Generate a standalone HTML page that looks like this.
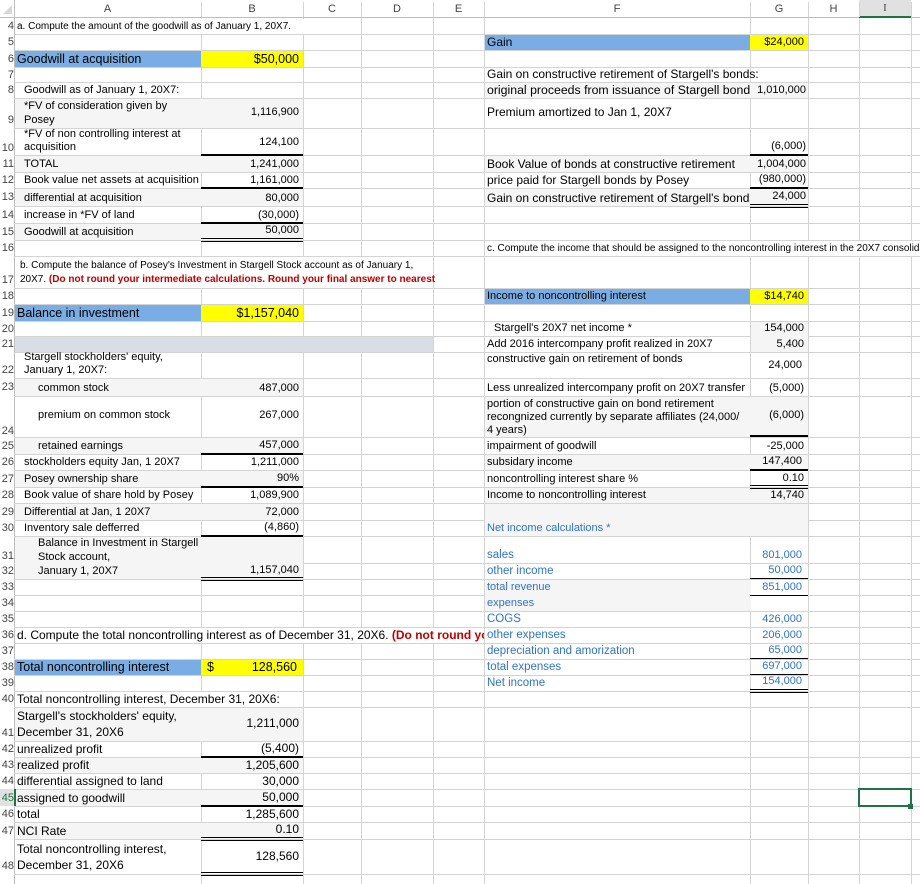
<!DOCTYPE html>
<html><head><meta charset="utf-8"><style>
body{margin:0;width:920px;height:884px;overflow:hidden;background:#fff;position:relative;font-family:"Liberation Sans",Arial,sans-serif;font-size:11px;color:#000}
div{position:absolute;box-sizing:border-box}
.h{left:14px;width:906px;height:1px;background:#d4d4d4}
.v{top:18px;width:1px;height:866px;background:#d4d4d4}
.t{display:flex;align-items:flex-end;padding-bottom:1px;white-space:nowrap;overflow:hidden;line-height:13px}
.m{align-items:center}
.r{justify-content:flex-end;padding-right:4px}
.k{background:#000;height:2px}
.k1{background:#000;height:1px}
.dbl{border-top:1px solid #000;border-bottom:1px solid #000;height:4px}
.n{left:0;width:14px;color:#444;font-size:11px;display:flex;align-items:center;justify-content:flex-end;overflow:hidden;white-space:nowrap}
.ch{top:0;height:18px;color:#444;font-size:11px;display:flex;align-items:center;justify-content:center}
.s{font-size:12.5px}
.b{font-size:12px}
.bl{color:#2e74c8}
.c10{font-size:10px}
.red{color:#c00000;font-weight:bold}
</style></head><body>
<div style="left:0;top:17px;width:920px;height:1px;background:#bdbdbd"></div>
<div style="left:14px;top:0;width:1px;height:884px;background:#bdbdbd"></div>
<div style="left:3px;top:5px;width:0;height:0;border-left:9px solid transparent;border-bottom:9px solid #d8d8d8"></div>
<div class="ch" style="left:14px;width:187px">A</div>
<div class="ch" style="left:201px;width:102px">B</div>
<div class="ch" style="left:303px;width:58px">C</div>
<div class="ch" style="left:361px;width:72px">D</div>
<div class="ch" style="left:433px;width:51px">E</div>
<div class="ch" style="left:484px;width:266px">F</div>
<div class="ch" style="left:750px;width:58px">G</div>
<div class="ch" style="left:808px;width:51px">H</div>
<div class="ch" style="left:859px;width:52px;background:#e1e1e1;border-bottom:2px solid #217346;font-family:'Liberation Serif',serif">I</div>
<div style="left:201px;top:2px;width:1px;height:15px;background:#d4d4d4"></div>
<div style="left:303px;top:2px;width:1px;height:15px;background:#d4d4d4"></div>
<div style="left:361px;top:2px;width:1px;height:15px;background:#d4d4d4"></div>
<div style="left:433px;top:2px;width:1px;height:15px;background:#d4d4d4"></div>
<div style="left:484px;top:2px;width:1px;height:15px;background:#d4d4d4"></div>
<div style="left:750px;top:2px;width:1px;height:15px;background:#d4d4d4"></div>
<div style="left:808px;top:2px;width:1px;height:15px;background:#d4d4d4"></div>
<div style="left:859px;top:2px;width:1px;height:15px;background:#d4d4d4"></div>
<div style="left:911px;top:2px;width:1px;height:15px;background:#d4d4d4"></div>
<div class="v" style="left:201px"></div><div class="v" style="left:303px"></div><div class="v" style="left:361px"></div><div class="v" style="left:433px"></div><div class="v" style="left:484px"></div><div class="v" style="left:750px"></div><div class="v" style="left:808px"></div><div class="v" style="left:859px"></div><div class="v" style="left:911px"></div>
<div class="h" style="top:34px"></div><div class="h" style="top:50px"></div><div class="h" style="top:67px"></div><div class="h" style="top:82px"></div><div class="h" style="top:98px"></div><div class="h" style="top:128px"></div><div class="h" style="top:155px"></div><div class="h" style="top:172px"></div><div class="h" style="top:188px"></div><div class="h" style="top:206px"></div><div class="h" style="top:223px"></div><div class="h" style="top:240px"></div><div class="h" style="top:256px"></div><div class="h" style="top:288px"></div><div class="h" style="top:304px"></div><div class="h" style="top:321px"></div><div class="h" style="top:336px"></div><div class="h" style="top:352px"></div><div class="h" style="top:378px"></div><div class="h" style="top:396px"></div><div class="h" style="top:437px"></div><div class="h" style="top:454px"></div><div class="h" style="top:470px"></div><div class="h" style="top:487px"></div><div class="h" style="top:503px"></div><div class="h" style="top:520px"></div><div class="h" style="top:536px"></div><div class="h" style="top:563px"></div><div class="h" style="top:579px"></div><div class="h" style="top:595px"></div><div class="h" style="top:611px"></div><div class="h" style="top:627px"></div><div class="h" style="top:643px"></div><div class="h" style="top:659px"></div><div class="h" style="top:675px"></div><div class="h" style="top:691px"></div><div class="h" style="top:707px"></div><div class="h" style="top:741px"></div><div class="h" style="top:757px"></div><div class="h" style="top:773px"></div><div class="h" style="top:789px"></div><div class="h" style="top:806px"></div><div class="h" style="top:822px"></div><div class="h" style="top:839px"></div><div class="h" style="top:874px"></div>
<div style="left:15px;top:19px;width:300px;height:15px;background:#fff"></div>
<div style="left:15px;top:257px;width:418px;height:31px;background:#fff"></div>
<div style="left:485px;top:241px;width:435px;height:15px;background:#fff"></div>
<div style="left:15px;top:628px;width:469px;height:15px;background:#fff"></div>
<div style="left:15px;top:692px;width:288px;height:15px;background:#fff"></div>
<div style="left:15px;top:99px;width:288px;height:29px;background:#f5f5f5"></div>
<div style="left:15px;top:156px;width:288px;height:16px;background:#f5f5f5"></div>
<div style="left:15px;top:189px;width:288px;height:17px;background:#f5f5f5"></div>
<div style="left:15px;top:224px;width:288px;height:16px;background:#f5f5f5"></div>
<div style="left:15px;top:337px;width:418px;height:15px;background:#d9dde6"></div>
<div style="left:15px;top:379px;width:288px;height:17px;background:#f5f5f5"></div>
<div style="left:15px;top:438px;width:288px;height:16px;background:#f5f5f5"></div>
<div style="left:15px;top:471px;width:288px;height:16px;background:#f5f5f5"></div>
<div style="left:15px;top:504px;width:288px;height:16px;background:#f5f5f5"></div>
<div style="left:15px;top:537px;width:288px;height:42px;background:#f5f5f5"></div>
<div style="left:15px;top:708px;width:288px;height:33px;background:#f5f5f5"></div>
<div style="left:15px;top:758px;width:288px;height:15px;background:#f5f5f5"></div>
<div style="left:15px;top:790px;width:288px;height:16px;background:#f5f5f5"></div>
<div style="left:15px;top:823px;width:288px;height:16px;background:#f5f5f5"></div>
<div style="left:485px;top:83px;width:323px;height:15px;background:#f5f5f5"></div>
<div style="left:485px;top:156px;width:323px;height:16px;background:#f5f5f5"></div>
<div style="left:485px;top:189px;width:323px;height:17px;background:#f5f5f5"></div>
<div style="left:751px;top:322px;width:57px;height:30px;background:#f5f5f5"></div>
<div style="left:485px;top:397px;width:323px;height:40px;background:#f5f5f5"></div>
<div style="left:485px;top:455px;width:323px;height:15px;background:#f5f5f5"></div>
<div style="left:485px;top:488px;width:323px;height:15px;background:#f5f5f5"></div>
<div style="left:485px;top:504px;width:323px;height:32px;background:#f5f5f5"></div>
<div style="left:485px;top:580px;width:266px;height:31px;background:#f5f5f5"></div>
<div style="left:15px;top:51px;width:186px;height:16px;background:#79ade3"></div>
<div style="left:201px;top:51px;width:102px;height:16px;background:#ffff00"></div>
<div style="left:485px;top:35px;width:265px;height:15px;background:#79ade3"></div>
<div style="left:750px;top:35px;width:58px;height:15px;background:#ffff00"></div>
<div style="left:15px;top:305px;width:186px;height:16px;background:#79ade3"></div>
<div style="left:201px;top:305px;width:102px;height:16px;background:#ffff00"></div>
<div style="left:485px;top:289px;width:265px;height:15px;background:#79ade3"></div>
<div style="left:750px;top:289px;width:58px;height:15px;background:#ffff00"></div>
<div style="left:15px;top:660px;width:186px;height:15px;background:#79ade3"></div>
<div style="left:201px;top:660px;width:102px;height:15px;background:#ffff00"></div>
<div class="k" style="left:201px;top:154px;width:102px"></div>
<div class="k" style="left:201px;top:187px;width:102px"></div>
<div class="k" style="left:201px;top:222px;width:102px"></div>
<div class="dbl" style="left:201px;top:238px;width:102px"></div>
<div class="k" style="left:750px;top:154px;width:58px"></div>
<div class="k" style="left:750px;top:187px;width:58px"></div>
<div class="dbl" style="left:750px;top:204px;width:58px"></div>
<div class="k" style="left:201px;top:453px;width:102px"></div>
<div class="k" style="left:201px;top:486px;width:102px"></div>
<div class="k" style="left:201px;top:535px;width:102px"></div>
<div class="dbl" style="left:201px;top:577px;width:102px"></div>
<div class="k" style="left:750px;top:435px;width:58px"></div>
<div class="k" style="left:750px;top:469px;width:58px"></div>
<div class="dbl" style="left:750px;top:485px;width:58px"></div>
<div class="k1" style="left:750px;top:578px;width:58px"></div>
<div class="k1" style="left:750px;top:595px;width:58px"></div>
<div class="k1" style="left:750px;top:658px;width:58px"></div>
<div class="k1" style="left:750px;top:674px;width:58px"></div>
<div class="dbl" style="left:750px;top:689px;width:58px"></div>
<div class="k" style="left:201px;top:756px;width:102px"></div>
<div class="k" style="left:201px;top:805px;width:102px"></div>
<div class="dbl" style="left:201px;top:837px;width:102px"></div>
<div class="dbl" style="left:201px;top:872px;width:102px"></div>
<div style="left:858px;top:788px;width:54px;height:19px;border:2px solid #217346"></div>
<div style="left:908px;top:804px;width:5px;height:5px;background:#217346"></div>
<div style="left:14px;top:789px;width:2px;height:17px;background:#217346"></div>
<div class="n" style="top:18px;height:16px">4</div><div class="n" style="top:34px;height:16px">5</div><div class="n" style="top:50px;height:17px">6</div><div class="n" style="top:67px;height:15px">7</div><div class="n" style="top:82px;height:16px">8</div><div class="n" style="top:112px;height:16px">9</div><div class="n" style="top:140px;height:15px">10</div><div class="n" style="top:155px;height:17px">11</div><div class="n" style="top:172px;height:16px">12</div><div class="n" style="top:188px;height:18px">13</div><div class="n" style="top:206px;height:17px">14</div><div class="n" style="top:223px;height:17px">15</div><div class="n" style="top:240px;height:16px">16</div><div class="n" style="top:272px;height:16px">17</div><div class="n" style="top:288px;height:16px">18</div><div class="n" style="top:304px;height:17px">19</div><div class="n" style="top:321px;height:15px">20</div><div class="n" style="top:336px;height:16px">21</div><div class="n" style="top:362px;height:16px">22</div><div class="n" style="top:378px;height:18px">23</div><div class="n" style="top:423px;height:16px">24</div><div class="n" style="top:437px;height:17px">25</div><div class="n" style="top:454px;height:16px">26</div><div class="n" style="top:470px;height:17px">27</div><div class="n" style="top:487px;height:16px">28</div><div class="n" style="top:503px;height:17px">29</div><div class="n" style="top:520px;height:16px">30</div><div class="n" style="top:548px;height:15px">31</div><div class="n" style="top:563px;height:16px">32</div><div class="n" style="top:579px;height:16px">33</div><div class="n" style="top:595px;height:16px">34</div><div class="n" style="top:611px;height:16px">35</div><div class="n" style="top:627px;height:16px">36</div><div class="n" style="top:643px;height:16px">37</div><div class="n" style="top:659px;height:16px">38</div><div class="n" style="top:675px;height:16px">39</div><div class="n" style="top:691px;height:16px">40</div><div class="n" style="top:725px;height:16px">41</div><div class="n" style="top:741px;height:16px">42</div><div class="n" style="top:757px;height:16px">43</div><div class="n" style="top:773px;height:16px">44</div><div class="n" style="top:789px;height:17px;color:#217346;background:#e1e1e1">45</div><div class="n" style="top:806px;height:16px">46</div><div class="n" style="top:822px;height:17px">47</div><div class="n" style="top:858px;height:16px">48</div>

<div class="t c10" style="left:17px;top:18px;width:300px;height:16px">a. Compute the amount of the goodwill as of January 1, 20X7.</div>
<div class="t s" style="left:17px;top:50px;width:184px;height:17px">Goodwill at acquisition</div>
<div class="t r s" style="left:201px;top:50px;width:102px;height:17px">$50,000</div>
<div class="t" style="left:24px;top:82px;width:177px;height:16px">Goodwill as of January 1, 20X7:</div>
<div class="t" style="left:24px;top:98px;width:177px;height:30px;line-height:14px">*FV of consideration given by<br>Posey</div>
<div class="t r m" style="left:201px;top:98px;width:102px;height:30px">1,116,900</div>
<div class="t" style="left:24px;top:128px;width:177px;height:27px;line-height:13px">*FV of non controlling interest at<br>acquisition</div>
<div class="t r m" style="left:201px;top:128px;width:102px;height:30px">124,100</div>
<div class="t" style="left:24px;top:155px;width:177px;height:17px">TOTAL</div><div class="t r" style="left:201px;top:155px;width:102px;height:17px">1,241,000</div>
<div class="t" style="left:24px;top:172px;width:177px;height:16px">Book value net assets at acquisition</div><div class="t r" style="left:201px;top:172px;width:102px;height:16px">1,161,000</div>
<div class="t" style="left:24px;top:188px;width:177px;height:18px">differential at acquisition</div><div class="t r" style="left:201px;top:188px;width:102px;height:18px">80,000</div>
<div class="t" style="left:24px;top:206px;width:177px;height:17px">increase in *FV of land</div><div class="t r" style="left:201px;top:206px;width:102px;height:17px">(30,000)</div>
<div class="t" style="left:24px;top:223px;width:177px;height:17px">Goodwill at acquisition</div><div class="t r" style="left:201px;top:223px;width:102px;height:15px">50,000</div>
<div class="c10" style="left:20px;top:259px;width:420px;line-height:14px;white-space:nowrap;overflow:hidden">b. Compute the balance of Posey's Investment in Stargell Stock account as of January 1,<br>20X7. <span class="red">(Do not round your intermediate calculations. Round your final answer to nearest</span></div>
<div class="t s" style="left:17px;top:304px;width:184px;height:17px">Balance in investment</div>
<div class="t r s" style="left:201px;top:304px;width:102px;height:17px">$1,157,040</div>
<div class="t" style="left:24px;top:352px;width:177px;height:26px;line-height:13px">Stargell stockholders' equity,<br>January 1, 20X7:</div>
<div class="t" style="left:38px;top:378px;width:163px;height:18px">common stock</div><div class="t r" style="left:201px;top:378px;width:102px;height:18px">487,000</div>
<div class="t m" style="left:38px;top:396px;width:163px;height:40px">premium on common stock</div><div class="t r m" style="left:201px;top:396px;width:102px;height:40px">267,000</div>
<div class="t" style="left:38px;top:437px;width:163px;height:17px">retained earnings</div><div class="t r" style="left:201px;top:437px;width:102px;height:16px">457,000</div>
<div class="t" style="left:24px;top:454px;width:177px;height:16px">stockholders equity Jan, 1 20X7</div><div class="t r" style="left:201px;top:454px;width:102px;height:16px">1,211,000</div>
<div class="t" style="left:24px;top:470px;width:177px;height:17px">Posey ownership share</div><div class="t r" style="left:201px;top:470px;width:102px;height:16px">90%</div>
<div class="t" style="left:24px;top:487px;width:177px;height:16px">Book value of share hold by Posey</div><div class="t r" style="left:201px;top:487px;width:102px;height:16px">1,089,900</div>
<div class="t" style="left:24px;top:503px;width:177px;height:17px">Differential at Jan, 1 20X7</div><div class="t r" style="left:201px;top:503px;width:102px;height:17px">72,000</div>
<div class="t" style="left:24px;top:520px;width:177px;height:16px">Inventory sale defferred</div><div class="t r" style="left:201px;top:520px;width:102px;height:15px">(4,860)</div>
<div class="t" style="left:38px;top:536px;width:163px;height:43px;line-height:14px">Balance in Investment in Stargell<br>Stock account,<br>January 1, 20X7</div>
<div class="t r" style="left:201px;top:563px;width:102px;height:15px">1,157,040</div>
<div class="t b" style="left:17px;top:627px;width:467px;height:16px">d. Compute the total noncontrolling interest as of December 31, 20X6.&nbsp;<span class="red">(Do not round your</span></div>
<div class="t s" style="left:17px;top:659px;width:184px;height:16px">Total noncontrolling interest</div>
<div class="t s" style="left:207px;top:659px;width:20px;height:16px">$</div>
<div class="t r s" style="left:201px;top:659px;width:102px;height:16px;padding-right:6px">128,560</div>
<div class="t b" style="left:17px;top:691px;width:300px;height:16px">Total noncontrolling interest, December 31, 20X6:</div>
<div class="t b" style="left:17px;top:707px;width:184px;height:34px;line-height:16px">Stargell's stockholders' equity,<br>December 31, 20X6</div>
<div class="t r m b" style="left:201px;top:707px;width:102px;height:34px">1,211,000</div>
<div class="t b" style="left:17px;top:741px;width:184px;height:16px">unrealized profit</div><div class="t r b" style="left:201px;top:741px;width:102px;height:15px">(5,400)</div>
<div class="t b" style="left:17px;top:757px;width:184px;height:16px">realized profit</div><div class="t r b" style="left:201px;top:757px;width:102px;height:16px">1,205,600</div>
<div class="t b" style="left:17px;top:773px;width:184px;height:16px">differential assigned to land</div><div class="t r b" style="left:201px;top:773px;width:102px;height:16px">30,000</div>
<div class="t b" style="left:17px;top:789px;width:184px;height:17px">assigned to goodwill</div><div class="t r b" style="left:201px;top:789px;width:102px;height:16px">50,000</div>
<div class="t b" style="left:17px;top:806px;width:184px;height:16px">total</div><div class="t r b" style="left:201px;top:806px;width:102px;height:16px">1,285,600</div>
<div class="t b" style="left:17px;top:822px;width:184px;height:17px">NCI Rate</div><div class="t r b" style="left:201px;top:822px;width:102px;height:15px">0.10</div>
<div class="t b" style="left:17px;top:839px;width:184px;height:35px;line-height:16px">Total noncontrolling interest,<br>December 31, 20X6</div>
<div class="t r m b" style="left:201px;top:839px;width:102px;height:35px">128,560</div>

<div class="t b" style="left:487px;top:34px;width:263px;height:16px">Gain</div>
<div class="t r" style="left:750px;top:34px;width:58px;height:16px">$24,000</div>
<div class="t b" style="left:487px;top:67px;width:300px;height:15px">Gain on constructive retirement of Stargell's bonds:</div>
<div class="t b" style="left:487px;top:82px;width:263px;height:16px;font-size:12.3px">original proceeds from issuance of Stargell bonds</div>
<div class="t r" style="left:750px;top:82px;width:58px;height:16px;padding-right:2px">1,010,000</div>
<div class="t b" style="left:487px;top:104px;width:263px;height:16px">Premium amortized to Jan 1, 20X7</div>
<div class="t r" style="left:750px;top:138px;width:58px;height:16px;padding-right:2px">(6,000)</div>
<div class="t b" style="left:487px;top:155px;width:263px;height:17px">Book Value of bonds at constructive retirement</div><div class="t r" style="left:750px;top:155px;width:58px;height:17px;padding-right:2px">1,004,000</div>
<div class="t b" style="left:487px;top:172px;width:263px;height:16px">price paid for Stargell bonds by Posey</div><div class="t r" style="left:750px;top:172px;width:58px;height:15px;padding-right:2px">(980,000)</div>
<div class="t b" style="left:487px;top:188px;width:263px;height:18px">Gain on constructive retirement of Stargell's bonds</div><div class="t r" style="left:750px;top:188px;width:58px;height:16px;padding-right:2px">24,000</div>
<div class="t c10" style="left:487px;top:240px;width:433px;height:16px">c. Compute the income that should be assigned to the noncontrolling interest in the 20X7 consolidated</div>
<div class="t" style="left:487px;top:288px;width:263px;height:16px">Income to noncontrolling interest</div>
<div class="t r" style="left:750px;top:288px;width:58px;height:16px">$14,740</div>
<div class="t" style="left:494px;top:321px;width:256px;height:15px">Stargell's 20X7 net income *</div><div class="t r" style="left:750px;top:321px;width:58px;height:15px">154,000</div>
<div class="t" style="left:487px;top:336px;width:263px;height:16px">Add 2016 intercompany profit realized in 20X7</div><div class="t r" style="left:750px;top:336px;width:58px;height:16px">5,400</div>
<div class="t" style="left:487px;top:352px;width:263px;height:15px">constructive gain on retirement of bonds</div><div class="t r" style="left:750px;top:357px;width:58px;height:16px;padding-right:6px">24,000</div>
<div class="t" style="left:487px;top:378px;width:263px;height:18px">Less unrealized intercompany profit on 20X7 transfer</div><div class="t r" style="left:750px;top:378px;width:58px;height:18px">(5,000)</div>
<div class="t" style="left:487px;top:396px;width:263px;height:41px;line-height:13px;padding-bottom:0">portion of constructive gain on bond retirement<br>recongnized currently by separate affiliates (24,000/<br>4 years)</div>
<div class="t r m" style="left:750px;top:396px;width:58px;height:40px">(6,000)</div>
<div class="t" style="left:487px;top:437px;width:263px;height:17px">impairment of goodwill</div><div class="t r" style="left:750px;top:437px;width:58px;height:17px">-25,000</div>
<div class="t" style="left:487px;top:454px;width:263px;height:16px">subsidary income</div><div class="t r" style="left:750px;top:454px;width:58px;height:15px;padding-right:6px">147,400</div>
<div class="t" style="left:487px;top:470px;width:263px;height:17px">noncontrolling interest share %</div><div class="t r" style="left:750px;top:470px;width:58px;height:16px">0.10</div>
<div class="t" style="left:487px;top:487px;width:263px;height:16px">Income to noncontrolling interest</div><div class="t r" style="left:750px;top:487px;width:58px;height:16px">14,740</div>
<div class="t bl" style="left:487px;top:520px;width:263px;height:16px">Net income calculations *</div>
<div class="t bl" style="left:487px;top:548px;width:263px;height:15px;font-size:11.5px">sales</div><div class="t r bl" style="left:750px;top:548px;width:58px;height:15px;padding-right:6px">801,000</div>
<div class="t bl" style="left:487px;top:563px;width:263px;height:16px;font-size:11.5px">other income</div><div class="t r bl" style="left:750px;top:563px;width:58px;height:15px;padding-right:6px">50,000</div>
<div class="t bl" style="left:487px;top:579px;width:263px;height:16px">total revenue</div><div class="t r bl" style="left:750px;top:579px;width:58px;height:16px;padding-right:6px">851,000</div>
<div class="t bl" style="left:487px;top:595px;width:263px;height:16px">expenses</div>
<div class="t bl" style="left:487px;top:611px;width:263px;height:16px;font-size:11.5px">COGS</div><div class="t r bl" style="left:750px;top:611px;width:58px;height:16px;padding-right:6px">426,000</div>
<div class="t bl" style="left:487px;top:627px;width:263px;height:16px;font-size:11.5px">other expenses</div><div class="t r bl" style="left:750px;top:627px;width:58px;height:16px;padding-right:6px">206,000</div>
<div class="t bl" style="left:487px;top:643px;width:263px;height:16px;font-size:11.5px">depreciation and amorization</div><div class="t r bl" style="left:750px;top:643px;width:58px;height:15px;padding-right:6px">65,000</div>
<div class="t bl" style="left:487px;top:659px;width:263px;height:16px;font-size:11.5px">total expenses</div><div class="t r bl" style="left:750px;top:659px;width:58px;height:15px;padding-right:6px">697,000</div>
<div class="t bl" style="left:487px;top:675px;width:263px;height:16px;font-size:11.5px">Net income</div><div class="t r bl" style="left:750px;top:675px;width:58px;height:14px;padding-right:6px">154,000</div>
</body></html>
